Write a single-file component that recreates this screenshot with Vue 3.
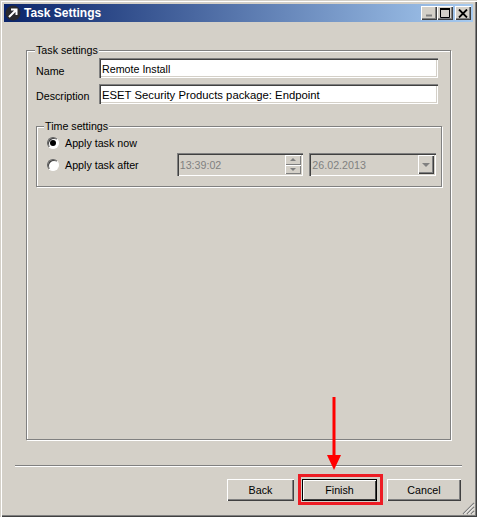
<template>
  <div class="window">
    <header class="titlebar">
      <svg class="app-icon" width="16" height="16" viewBox="0 0 16 16" aria-hidden="true">
        <circle cx="8" cy="8" r="7.5" fill="#2a2a2e"/>
        <path d="M4 12L11 5M6 4.5H11.5V10" fill="none" stroke="#fff" stroke-width="2"/>
      </svg>
      <span class="title">Task Settings</span>
      <div class="caption-buttons">
        <button class="caption-btn disabled" aria-label="Minimize">
          <svg width="8" height="8" viewBox="0 0 8 8"><path d="M1 6.5H7" stroke="#808080" stroke-width="2"/></svg>
        </button>
        <button class="caption-btn" aria-label="Maximize">
          <svg width="10" height="10" viewBox="0 0 10 10"><path d="M0.5 1.5H9.5V9.5H0.5Z" fill="none" stroke="#000"/><path d="M0 1H10" stroke="#000" stroke-width="2"/></svg>
        </button>
        <button class="caption-btn close" aria-label="Close">
          <svg width="10" height="9" viewBox="0 0 10 9"><path d="M1 0.5L9 8.5M9 0.5L1 8.5" stroke="#000" stroke-width="1.8"/></svg>
        </button>
      </div>
    </header>

    <main class="content">
      <section class="group task-group">
        <span class="legend">Task settings</span>
        <div class="fields">
          <label class="name-label">Name</label>
          <input class="field" type="text" value="Remote Install">
          <label>Description</label>
          <input class="field wide" type="text" value="ESET Security Products package: Endpoint">
        </div>

        <section class="group time-group">
          <span class="legend">Time settings</span>
          <div class="time-row first">
            <span class="radio checked"></span>
            <span>Apply task now</span>
          </div>
          <div class="time-row">
            <span class="radio"></span>
            <span class="radio-label">Apply task after</span>
            <div class="sunken time-box">
              <span>13:39:02</span>
              <div class="spin">
                <span class="spin-btn"><i class="tri up"></i></span>
                <span class="spin-btn"><i class="tri down"></i></span>
              </div>
            </div>
            <div class="sunken date-box">
              <span>26.02.2013</span>
              <span class="drop-btn"><i class="tri down big"></i></span>
            </div>
          </div>
        </section>
      </section>

      <div class="separator"></div>

      <footer class="actions">
        <button class="btn back">Back</button>
        <div class="finish-wrap">
          <button class="btn default">Finish</button>
          <div class="highlight"></div>
          <svg class="arrow" width="16" height="74" viewBox="0 0 16 74" aria-hidden="true">
            <path d="M8 0V60" stroke="#f00" stroke-width="3"/>
            <path d="M1 58H15L8 73Z" fill="#f00"/>
          </svg>
        </div>
        <button class="btn cancel">Cancel</button>
      </footer>
    </main>

    <svg class="grip" width="14" height="14" viewBox="0 0 14 14" aria-hidden="true">
      <path d="M13 2L2 13M13 6L6 13M13 10L10 13" stroke="#808080" stroke-width="1.2"/>
      <path d="M13 3.4L3.4 13M13 7.4L7.4 13M13 11.4L11.4 13" stroke="#fff" stroke-width="1"/>
    </svg>
  </div>
</template>

<script setup>
</script>

<style>
body {
  margin: 0;
  overflow: hidden;
}
</style>

<style scoped>
.window {
  position: relative;
  box-sizing: border-box;
  width: 477px;
  height: 517px;
  padding: 4px;
  display: flex;
  flex-direction: column;
  background: #d4d0c8;
  color: #000;
  font-family: "Liberation Sans", Arial, sans-serif;
  font-size: 10.7px;
  box-shadow: inset 1px 1px 0 #d4d0c8, inset 2px 2px 0 #fff, inset -1px -1px 0 #404040, inset -2px -2px 0 #808080;
  overflow: hidden;
}

.titlebar {
  flex: 0 0 18px;
  display: flex;
  align-items: center;
  padding: 0 2px 0 1px;
  background: linear-gradient(to right, #0a246a, #a6caf0);
}

.app-icon {
  flex: none;
}

.title {
  margin-left: 3px;
  color: #fff;
  font-weight: bold;
  font-size: 12px;
}

.caption-buttons {
  margin-left: auto;
  display: flex;
}

.caption-btn {
  box-sizing: border-box;
  width: 16px;
  height: 14px;
  margin: 0;
  padding: 0;
  display: flex;
  align-items: center;
  justify-content: center;
  border: 0;
  background: #d4d0c8;
  box-shadow: inset 1px 1px 0 #fff, inset -1px -1px 0 #404040, inset -2px -2px 0 #808080;
}

.caption-btn.close {
  margin-left: 2px;
}

.content {
  flex: 1;
  display: flex;
  flex-direction: column;
  min-height: 0;
}

.group {
  position: relative;
  box-sizing: border-box;
  border: 1px solid #808080;
  box-shadow: 1px 1px 0 #fff, inset 1px 1px 0 #fff;
}

.legend {
  position: absolute;
  top: -8px;
  left: 8px;
  padding: 0 1px;
  background: #d4d0c8;
  line-height: 14px;
}

.task-group {
  height: 390px;
  margin: 28px 22px 0 22px;
  padding: 7px 12px 0 9px;
}

.fields {
  display: grid;
  grid-template-columns: 63px 1fr;
  row-gap: 6px;
  align-items: center;
}

.fields label {
  padding-top: 4px;
}

.fields .name-label {
  padding-top: 5px;
}

.field {
  box-sizing: border-box;
  width: 100%;
  height: 20px;
  margin: 0;
  padding: 1px 3px 0;
  border: 0;
  outline: 0;
  background: #fff;
  font: inherit;
  color: #000;
  box-shadow: inset 1px 1px 0 #808080, inset 2px 2px 0 #404040, inset -1px -1px 0 #fff, inset -2px -2px 0 #d4d0c8;
}

.field.wide {
  font-size: 11.3px;
}

.time-group {
  height: 61px;
  margin: 22px -4px 0 0;
  padding: 7px 5px 0 10px;
}

.time-group .legend {
  left: 7px;
}

.time-row {
  display: flex;
  align-items: center;
  height: 23px;
}

.time-row.first {
  height: 18px;
  margin-bottom: 1px;
}

.radio {
  position: relative;
  box-sizing: border-box;
  flex: none;
  width: 12px;
  height: 12px;
  margin-right: 6px;
  border-radius: 50%;
  background: #fff;
  border: 1px solid;
  border-color: #606060 #fff #fff #606060;
  box-shadow: inset 1px 1px 0 #404040;
}

.radio.checked::after {
  content: "";
  position: absolute;
  inset: 2px;
  border-radius: 50%;
  background: #000;
}

.radio-label {
  width: 112px;
}

.sunken {
  box-sizing: border-box;
  height: 23px;
  display: flex;
  align-items: center;
  justify-content: space-between;
  padding: 2px 2px 2px 3px;
  color: #808080;
  background: #d4d0c8;
  box-shadow: inset 1px 1px 0 #808080, inset 2px 2px 0 #404040, inset -1px -1px 0 #fff, inset -2px -2px 0 #d4d0c8;
}

.time-box {
  width: 127px;
}

.date-box {
  width: 127px;
  margin-left: 6px;
}

.spin {
  display: flex;
  flex-direction: column;
  width: 16px;
  height: 19px;
}

.spin-btn {
  flex: 1;
  display: flex;
  align-items: center;
  justify-content: center;
  box-shadow: inset 1px 1px 0 #fff, inset -1px -1px 0 #808080;
}

.drop-btn {
  width: 16px;
  height: 19px;
  display: flex;
  align-items: center;
  justify-content: center;
  box-shadow: inset 1px 1px 0 #fff, inset -1px -1px 0 #404040, inset -2px -2px 0 #808080;
}

.tri {
  width: 0;
  height: 0;
  border-left: 3px solid transparent;
  border-right: 3px solid transparent;
}

.tri.up {
  border-bottom: 3px solid #808080;
}

.tri.down {
  border-top: 3px solid #808080;
}

.tri.big {
  border-left-width: 4px;
  border-right-width: 4px;
  border-top-width: 4px;
}

.separator {
  height: 1px;
  margin: 25px 11px 0;
  background: #808080;
  box-shadow: 0 1px 0 #fff;
}

.actions {
  display: flex;
  justify-content: flex-end;
  gap: 8px;
  margin: 13px 12px 0 0;
}

.btn {
  box-sizing: border-box;
  width: 74px;
  height: 22px;
  margin: 0;
  padding: 0;
  border: 0;
  background: #d4d0c8;
  font: inherit;
  color: #000;
  box-shadow: inset 1px 1px 0 #fff, inset -1px -1px 0 #404040, inset -2px -2px 0 #808080;
}

.btn.back {
  width: 67px;
}

.btn.default {
  display: block;
  width: 75px;
  box-shadow: inset 0 0 0 1px #000, inset 2px 2px 0 #fff, inset -2px -2px 0 #404040;
}

.btn.cancel {
  margin-left: 2px;
}

.finish-wrap {
  position: relative;
}

.highlight {
  position: absolute;
  inset: -5px -6px -4px -4px;
  border: 3px solid #ed1c24;
  pointer-events: none;
}

.arrow {
  position: absolute;
  left: 24px;
  top: -82px;
}

.grip {
  position: absolute;
  right: 2px;
  bottom: 2px;
}
</style>
